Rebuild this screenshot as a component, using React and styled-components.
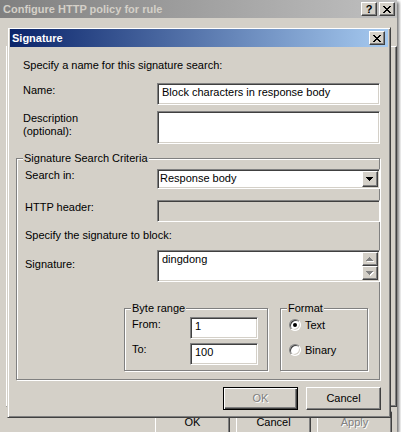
import React from "react";
import styled, { createGlobalStyle, css } from "styled-components";

const FACE = "#d4d0c8";

const GlobalStyle = createGlobalStyle`
  body {
    margin: 0;
    background: #fff;
  }
  * {
    box-sizing: border-box;
  }
`;

// win2k 3d edges
const raised = css`
  border: 1px solid;
  border-color: #fff #404040 #404040 #fff;
  box-shadow: inset -1px -1px #808080;
  background: ${FACE};
`;

const sunken = css`
  border: 1px solid;
  border-color: #808080 #fff #fff #808080;
  box-shadow: inset 1px 1px #404040, inset -1px -1px ${FACE};
`;

const Screen = styled.div`
  position: relative;
  width: 397px;
  height: 432px;
  overflow: hidden;
  display: flex;
  flex-direction: column;
  background: ${FACE};
  box-shadow: 2px 2px 3px rgba(0, 0, 0, 0.55);
  font-family: "Liberation Sans", Arial, sans-serif;
  font-size: 11px;
  line-height: 13px;
  color: #000;
`;

const TitleBar = styled.div`
  flex: none;
  height: 18px;
  display: flex;
  align-items: center;
  gap: 2px;
  padding: 0 ${(p) => p.$padRight}px 0 ${(p) => p.$padLeft}px;
  background: ${(p) =>
    p.$active
      ? "linear-gradient(to right, #0a246a, #a6caf0)"
      : "linear-gradient(to right, #808080, #c0c0c0)"};
  color: ${(p) => (p.$active ? "#fff" : FACE)};
  font-weight: bold;
`;

const TitleText = styled.div`
  flex: 1;
  white-space: nowrap;
`;

const CaptionButton = styled.div`
  ${raised};
  width: 16px;
  height: 14px;
  display: flex;
  align-items: center;
  justify-content: center;
  color: #000;
  font-weight: bold;
  font-size: 11px;
`;

const OuterBody = styled.div`
  flex: 1;
  display: flex;
  flex-direction: column;
`;

const TabPage = styled.div`
  flex: none;
  margin: 28px 0 0 6px;
  width: 391px;
  height: 361px;
  border: 1px solid;
  border-color: #fff #404040 #404040 #fff;
  box-shadow: inset -1px -1px #808080;
`;

const ButtonRow = styled.div`
  flex: none;
  display: flex;
  justify-content: ${(p) => (p.$end ? "flex-end" : "flex-start")};
  gap: ${(p) => p.$gap}px;
  margin-top: ${(p) => p.$mt}px;
  padding: 0 ${(p) => p.$pr || 0}px 0 ${(p) => p.$pl || 0}px;
`;

const Button = styled.div`
  ${raised};
  flex: none;
  width: 75px;
  height: 23px;
  display: flex;
  align-items: center;
  justify-content: center;
  color: ${(p) => (p.$disabled ? "#808080" : "#000")};
  text-shadow: ${(p) => (p.$disabled ? "1px 1px #fff" : "none")};
  ${(p) =>
    p.$default &&
    css`
      border: 1px solid #000;
      box-shadow: inset 1px 1px #fff, inset -1px -1px #404040,
        inset -2px -2px #808080;
    `}
`;

const Dialog = styled.div`
  position: absolute;
  left: 7px;
  top: 27px;
  width: 384px;
  height: 391px;
  display: flex;
  flex-direction: column;
  padding: 1px 2px 2px;
  background: ${FACE};
  border: 1px solid;
  border-color: ${FACE} #404040 #404040 ${FACE};
  box-shadow: inset 1px 1px #fff, inset -1px -1px #808080;
`;

const Client = styled.div`
  flex: 1;
  display: flex;
  flex-direction: column;
`;

const Text = styled.div`
  margin: ${(p) => p.$mt}px 0 0 ${(p) => p.$ml}px;
  white-space: nowrap;
`;

const FormRow = styled.div`
  display: grid;
  grid-template-columns: ${(p) => p.$label}px auto;
  align-items: start;
  margin-top: ${(p) => p.$mt}px;
  padding-left: ${(p) => p.$pl}px;
`;

const Label = styled.div`
  padding-top: ${(p) => p.$pt || 0}px;
  white-space: nowrap;
`;

const TextBox = styled.div`
  ${sunken};
  width: ${(p) => p.$w}px;
  height: ${(p) => p.$h}px;
  padding: 2px 4px;
  background: ${(p) => (p.$disabled ? FACE : "#fff")};
  white-space: nowrap;
  overflow: hidden;
`;

const Select = styled.div`
  ${sunken};
  width: 223px;
  height: 20px;
  padding: 1px;
  display: flex;
  background: #fff;
`;

const SelectText = styled.div`
  flex: 1;
  padding: 1px;
`;

const ArrowButton = styled.div`
  ${raised};
  width: 16px;
  flex: ${(p) => (p.$grow ? 1 : "none")};
  display: flex;
  align-items: center;
  justify-content: center;
`;

const MultiBox = styled.div`
  ${sunken};
  width: 223px;
  height: 32px;
  padding: 1px;
  display: flex;
  background: #fff;
`;

const MultiText = styled.div`
  flex: 1;
  padding: 1px 3px;
`;

const ScrollBar = styled.div`
  width: 16px;
  display: flex;
  flex-direction: column;
`;

const Group = styled.fieldset`
  margin: ${(p) => p.$mt || 0}px 0 0 ${(p) => p.$ml || 0}px;
  padding: 0;
  min-width: 0;
  width: ${(p) => p.$w}px;
  height: ${(p) => (p.$h ? `${p.$h}px` : "auto")};
  border: 1px solid #808080;
  box-shadow: inset 1px 1px #fff, 1px 1px #fff;
`;

const Legend = styled.legend`
  margin-left: 6px;
  padding: 0 1px;
  background: ${FACE};
  line-height: 13px;
  font-size: 11px;
`;

const GroupBody = styled.div`
  padding: 0 0 ${(p) => p.$pb || 0}px ${(p) => p.$pl}px;
`;

const SubGroups = styled.div`
  display: flex;
  gap: 12px;
  margin: 20px 0 0 99px;
`;

const RadioRow = styled.div`
  height: 16px;
  display: flex;
  align-items: center;
  gap: 4px;
  margin-top: ${(p) => p.$mt}px;
`;

const Radio = styled.span`
  width: 12px;
  height: 12px;
  border-radius: 50%;
  border: 1px solid;
  border-color: #808080 #fff #fff #808080;
  box-shadow: inset 1px 1px #404040, inset -1px -1px ${FACE};
  background: #fff;
  display: flex;
  align-items: center;
  justify-content: center;

  &::after {
    content: "";
    display: ${(p) => (p.$checked ? "block" : "none")};
    width: 4px;
    height: 4px;
    border-radius: 50%;
    background: #000;
  }
`;

const CloseGlyph = () => (
  <svg width="8" height="7" viewBox="0 0 8 7" shapeRendering="crispEdges">
    <path
      fill="#000"
      d="M0 0h2v1h-2zM6 0h2v1h-2zM1 1h2v1h-2zM5 1h2v1h-2zM2 2h4v1h-4zM3 3h2v1h-2zM2 4h4v1h-4zM1 5h2v1h-2zM5 5h2v1h-2zM0 6h2v1h-2zM6 6h2v1h-2z"
    />
  </svg>
);

const DOWN = "M0 0h7v1h-1v1h-1v1h-1v1h-1v-1h-1v-1h-1v-1h-1z";
const UP = "M3 0h1v1h1v1h1v1h1v1h-7v-1h1v-1h1v-1h1z";

const Arrow = ({ d, disabled }) => (
  <svg width="8" height="5" viewBox="0 0 8 5" shapeRendering="crispEdges">
    {disabled && <path d={d} fill="#fff" transform="translate(1 1)" />}
    <path d={d} fill={disabled ? "#808080" : "#000"} />
  </svg>
);

export default function App() {
  return (
    <>
      <GlobalStyle />
      <Screen>
        <TitleBar $padLeft={3} $padRight={2}>
          <TitleText>Configure HTTP policy for rule</TitleText>
          <CaptionButton>?</CaptionButton>
          <CaptionButton>
            <CloseGlyph />
          </CaptionButton>
        </TitleBar>
        <OuterBody>
          <TabPage />
          <ButtonRow $gap={6} $mt={4} $pl={155}>
            <Button>OK</Button>
            <Button>Cancel</Button>
            <Button $disabled>Apply</Button>
          </ButtonRow>
        </OuterBody>

        <Dialog>
          <TitleBar $active $padLeft={2} $padRight={3}>
            <TitleText>Signature</TitleText>
            <CaptionButton>
              <CloseGlyph />
            </CaptionButton>
          </TitleBar>
          <Client>
            <Text $mt={12} $ml={13}>
              Specify a name for this signature search:
            </Text>
            <FormRow $label={134} $mt={11} $pl={13}>
              <Label $pt={1}>Name:</Label>
              <TextBox $w={223} $h={22}>
                Block characters in response body
              </TextBox>
            </FormRow>
            <FormRow $label={134} $mt={6} $pl={13}>
              <Label $pt={1}>
                Description
                <br />
                (optional):
              </Label>
              <TextBox $w={223} $h={33} />
            </FormRow>

            <Group $mt={8} $ml={6} $w={364}>
              <Legend>Signature Search Criteria</Legend>
              <GroupBody $pl={8} $pb={8}>
                <FormRow $label={132} $mt={4} $pl={0}>
                  <Label>Search in:</Label>
                  <Select>
                    <SelectText>Response body</SelectText>
                    <ArrowButton>
                      <Arrow d={DOWN} />
                    </ArrowButton>
                  </Select>
                </FormRow>
                <FormRow $label={132} $mt={11} $pl={0}>
                  <Label $pt={1}>HTTP header:</Label>
                  <TextBox $w={223} $h={22} $disabled />
                </FormRow>
                <Text $mt={7} $ml={0}>
                  Specify the signature to block:
                </Text>
                <FormRow $label={132} $mt={8} $pl={0}>
                  <Label $pt={8}>Signature:</Label>
                  <MultiBox>
                    <MultiText>dingdong</MultiText>
                    <ScrollBar>
                      <ArrowButton $grow>
                        <Arrow d={UP} disabled />
                      </ArrowButton>
                      <ArrowButton $grow>
                        <Arrow d={DOWN} disabled />
                      </ArrowButton>
                    </ScrollBar>
                  </MultiBox>
                </FormRow>

                <SubGroups>
                  <Group $w={144} $h={69}>
                    <Legend>Byte range</Legend>
                    <GroupBody $pl={7}>
                      <FormRow $label={58} $mt={2} $pl={0}>
                        <Label $pt={1}>From:</Label>
                        <TextBox $w={68} $h={22}>
                          1
                        </TextBox>
                      </FormRow>
                      <FormRow $label={58} $mt={4} $pl={0}>
                        <Label>To:</Label>
                        <TextBox $w={68} $h={22}>
                          100
                        </TextBox>
                      </FormRow>
                    </GroupBody>
                  </Group>
                  <Group $w={88} $h={69}>
                    <Legend>Format</Legend>
                    <GroupBody $pl={8}>
                      <RadioRow $mt={2}>
                        <Radio $checked />
                        Text
                      </RadioRow>
                      <RadioRow $mt={9}>
                        <Radio />
                        Binary
                      </RadioRow>
                    </GroupBody>
                  </Group>
                </SubGroups>
              </GroupBody>
            </Group>

            <ButtonRow $end $gap={8} $mt={7} $pr={7}>
              <Button $default $disabled>
                OK
              </Button>
              <Button>Cancel</Button>
            </ButtonRow>
          </Client>
        </Dialog>
      </Screen>
    </>
  );
}
